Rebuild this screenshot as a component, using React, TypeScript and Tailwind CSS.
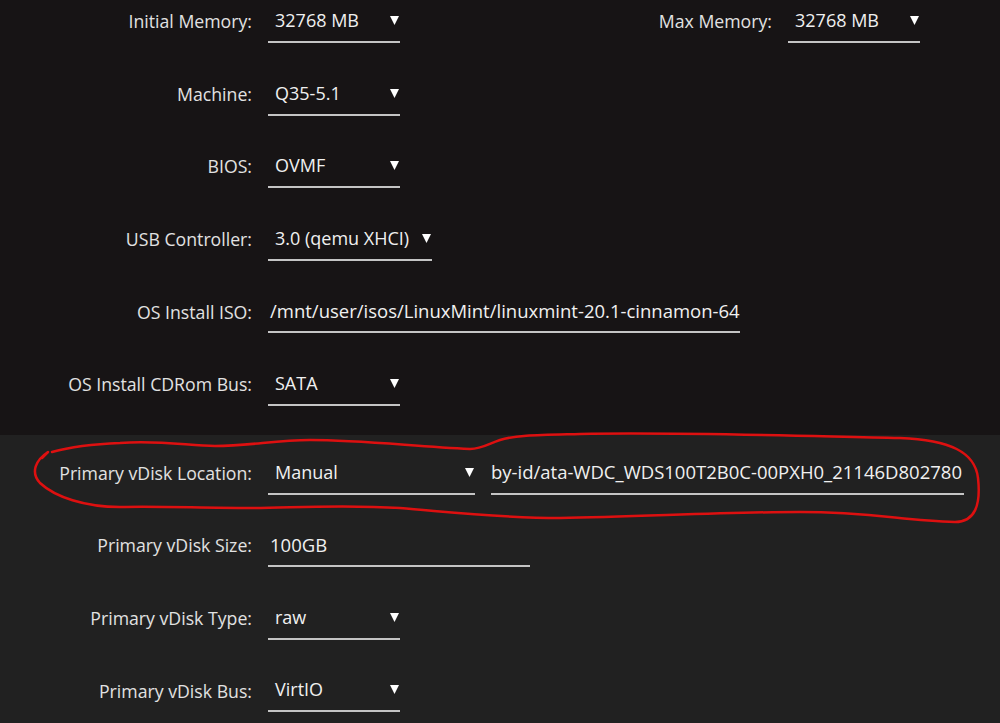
import { ReactNode } from 'react'

const font = { fontFamily: '"Open Sans", "Liberation Sans", sans-serif' }

function Label({ children, w = 'w-[252px]' }: { children: ReactNode; w?: string }) {
  return <div className={`${w} shrink-0 text-right text-[#e2e2e2] text-[17.7px]`}>{children}</div>
}

function Arrow() {
  return (
    <svg width="9" height="9" viewBox="0 0 9 9" className="shrink-0">
      <path d="M0 0 L9 0 L4.5 9 Z" fill="#ffffff" />
    </svg>
  )
}

function Select({ value, w = 'w-[132px]' }: { value: string; w?: string }) {
  return (
    <div className={`${w} h-[43px] shrink-0 flex items-center justify-between border-b-2 border-[#c4c4c4] pl-[7px] pr-[1px] text-[#f0f0f0] text-[18px]`}>
      <span className="whitespace-nowrap">{value}</span>
      <Arrow />
    </div>
  )
}

function Input({ value, w, alignEnd }: { value: string; w: string; alignEnd?: boolean }) {
  return (
    <div className={`${w} h-[43px] shrink-0 flex items-center overflow-hidden border-b-2 border-[#c4c4c4] px-[2px] text-[#f0f0f0] text-[18.5px] ${alignEnd ? 'justify-end' : 'justify-start'}`}>
      <span className="whitespace-nowrap">{value}</span>
    </div>
  )
}

function Row({ children }: { children: ReactNode }) {
  return <div className="flex items-center h-[43px] gap-4">{children}</div>
}

export default function App() {
  return (
    <div className="relative w-[1000px] h-[723px] overflow-hidden bg-[#212121]" style={font}>
      <div className="bg-[#171415] h-[435px] flex flex-col gap-[29.6px]">
        <Row>
          <Label>Initial Memory:</Label>
          <Select value="32768 MB" />
          <Label w="w-[356px]">Max Memory:</Label>
          <Select value="32768 MB" />
        </Row>
        <Row>
          <Label>Machine:</Label>
          <Select value="Q35-5.1" />
        </Row>
        <Row>
          <Label>BIOS:</Label>
          <Select value="OVMF" />
        </Row>
        <Row>
          <Label>USB Controller:</Label>
          <Select value="3.0 (qemu XHCI)" w="w-[164px]" />
        </Row>
        <Row>
          <Label>OS Install ISO:</Label>
          <Input value="/mnt/user/isos/LinuxMint/linuxmint-20.1-cinnamon-64bit.iso" w="w-[472px]" />
        </Row>
        <Row>
          <Label>OS Install CDRom Bus:</Label>
          <Select value="SATA" />
        </Row>
      </div>
      <div className="flex flex-col gap-[29.6px] pt-[16.5px]">
        <Row>
          <Label>Primary vDisk Location:</Label>
          <Select value="Manual" w="w-[207px]" />
          <Input value="/dev/disk/by-id/ata-WDC_WDS100T2B0C-00PXH0_21146D802780" w="w-[473px]" alignEnd />
        </Row>
        <Row>
          <Label>Primary vDisk Size:</Label>
          <Input value="100GB" w="w-[262px]" />
        </Row>
        <Row>
          <Label>Primary vDisk Type:</Label>
          <Select value="raw" />
        </Row>
        <Row>
          <Label>Primary vDisk Bus:</Label>
          <Select value="VirtIO" />
        </Row>
      </div>

      {/* hand-drawn annotation */}
      <svg className="absolute inset-0 pointer-events-none" width="1000" height="723" viewBox="0 0 1000 723">
        <path
          d="M52 452 C70 447 95 444 120 443 C160 440 190 446 215 446 C250 446 275 440 310 440 C360 440 410 446 470 449 C482 449 488 444 500 440 C515 435 540 435 580 434 C680 432 800 436 900 438 C950 440 975 452 978 478 C981 505 975 522 955 522 C900 520 870 512 800 512 C720 512 640 517 560 518 C500 518 450 512 400 508 C340 504 290 508 250 508 C200 508 160 506 120 507 C85 507 55 497 40 483 C30 472 36 460 48 452 L42 458"
          fill="none"
          stroke="#dd1010"
          strokeWidth="2.5"
          strokeLinecap="round"
          strokeLinejoin="round"
        />
      </svg>
    </div>
  )
}
